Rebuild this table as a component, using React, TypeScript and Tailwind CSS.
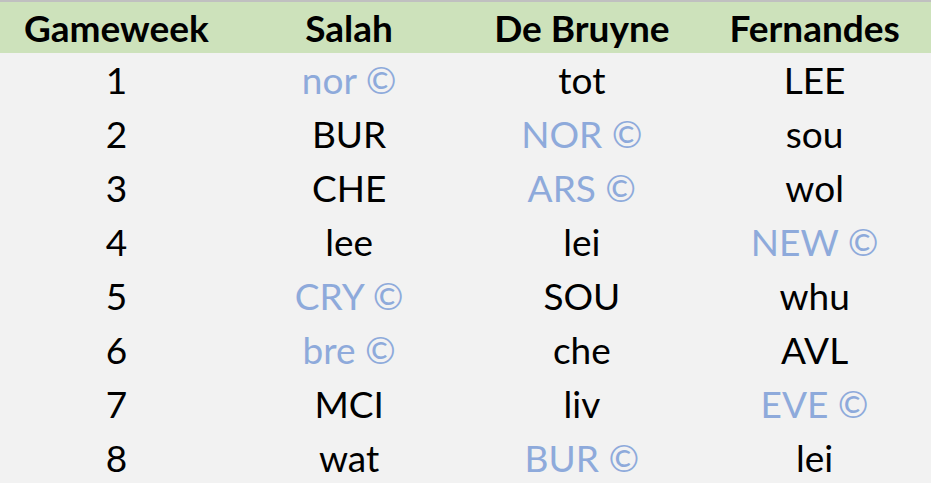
const rows: [string, string, string, string][] = [
  ['1', 'nor ©', 'tot', 'LEE'],
  ['2', 'BUR', 'NOR ©', 'sou'],
  ['3', 'CHE', 'ARS ©', 'wol'],
  ['4', 'lee', 'lei', 'NEW ©'],
  ['5', 'CRY ©', 'SOU', 'whu'],
  ['6', 'bre ©', 'che', 'AVL'],
  ['7', 'MCI', 'liv', 'EVE ©'],
  ['8', 'wat', 'BUR ©', 'lei'],
];

const headers = ['Gameweek', 'Salah', 'De Bruyne', 'Fernandes'];

function Cell({ value }: { value: string }) {
  // captained fixtures are shown in blue
  const captain = value.includes('©');
  return (
    <div
      className={`flex h-[54px] items-center justify-center ${
        captain ? 'text-[#8eaadb]' : 'text-black'
      }`}
    >
      {value}
    </div>
  );
}

export default function App() {
  return (
    <div
      className="h-[483px] w-[931px] overflow-hidden bg-[#f2f2f2] text-[37px]"
      style={{ fontFamily: 'Lato, "Open Sans", sans-serif' }}
    >
      <div className="grid grid-cols-4 border-t-2 border-[#c0c0c0] bg-[#cde2bb] font-bold">
        {headers.map((h) => (
          <div key={h} className="flex h-[51px] items-center justify-center">
            {h}
          </div>
        ))}
      </div>
      {rows.map((r) => (
        <div key={r[0]} className="grid grid-cols-4">
          {r.map((v, i) => (
            <Cell key={i} value={v} />
          ))}
        </div>
      ))}
    </div>
  );
}
